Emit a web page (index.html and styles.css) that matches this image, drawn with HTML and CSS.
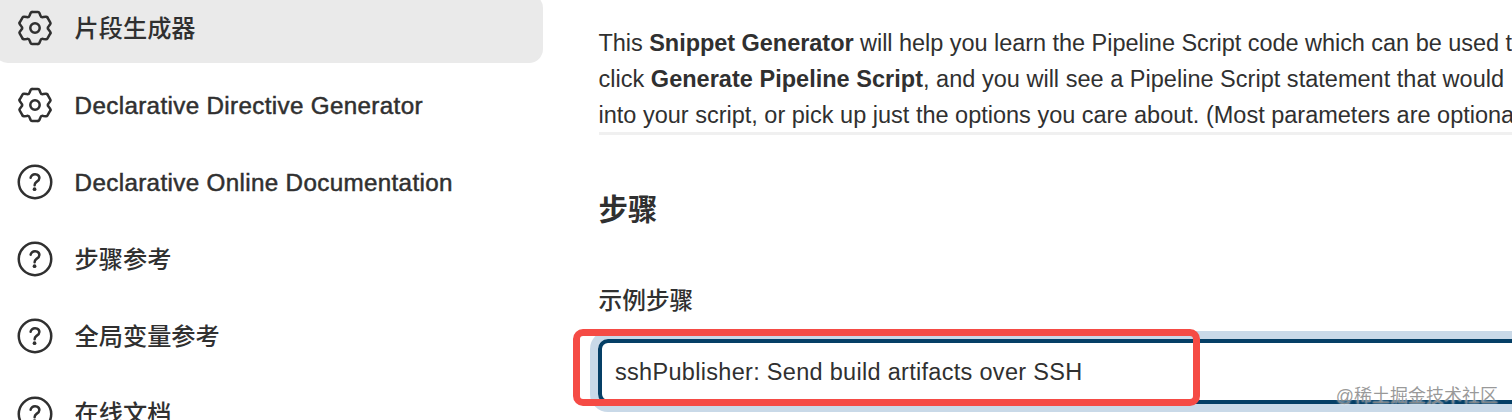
FILE: index.html
```
<!DOCTYPE html>
<html lang="zh-CN">
<head>
    <meta charset="UTF-8">
    <meta name="viewport" content="width=device-width, initial-scale=1.0">
    <title>片段生成器</title>
    <link rel="stylesheet" href="styles.css">
</head>
<body>
    <!-- shared icons -->
    <svg class="icon-defs" width="0" height="0">
        <defs>
            <path id="gear-tooth" d="M-3-16H3Q4-16 4.4-15L5.3-12.7Q6-10.4 8.35-10.94L10.8-11.3Q11.86-11.46 12.36-10.6"/>
        </defs>
        <symbol id="icon-gear" viewBox="-20 -20 40 40">
            <circle cx="0" cy="0" r="4.7"/>
            <use href="#gear-tooth"/>
            <use href="#gear-tooth" transform="rotate(60)"/>
            <use href="#gear-tooth" transform="rotate(120)"/>
            <use href="#gear-tooth" transform="rotate(180)"/>
            <use href="#gear-tooth" transform="rotate(240)"/>
            <use href="#gear-tooth" transform="rotate(300)"/>
        </symbol>
        <symbol id="icon-help" viewBox="0 0 512 512">
            <circle cx="256" cy="256" r="208"/>
            <path d="M200 202.29s.84-17.5 19.57-32.57C230.68 160.77 244 158.18 256 158c10.93-.14 20.69 1.67 26.53 4.45 10 4.76 29.47 16.38 29.47 41.09 0 26-17 37.81-36.37 50.8S251 281.43 251 296"/>
            <circle class="icon-dot" cx="250" cy="348" r="24"/>
        </symbol>
    </svg>

    <div class="page">
        <nav class="sidebar">
            <a class="task active" href="#">
                <svg class="icon gear"><use href="#icon-gear"/></svg>
                <span class="task-name">片段生成器</span>
            </a>
            <a class="task" href="#">
                <svg class="icon gear"><use href="#icon-gear"/></svg>
                <span class="task-latin">Declarative Directive Generator</span>
            </a>
            <a class="task" href="#">
                <svg class="icon"><use href="#icon-help"/></svg>
                <span class="task-latin">Declarative Online Documentation</span>
            </a>
            <a class="task" href="#">
                <svg class="icon"><use href="#icon-help"/></svg>
                <span class="task-name">步骤参考</span>
            </a>
            <a class="task" href="#">
                <svg class="icon"><use href="#icon-help"/></svg>
                <span class="task-name">全局变量参考</span>
            </a>
            <a class="task" href="#">
                <svg class="icon"><use href="#icon-help"/></svg>
                <span class="task-name">在线文档</span>
            </a>
        </nav>

        <main class="main-panel">
            <p class="intro">
                <span class="line-1">This <b>Snippet Generator</b> will help you learn the Pipeline Script code which can be used to</span><br>
                <span class="line-2">click <b>Generate Pipeline Script</b>, and you will see a Pipeline Script statement that would</span><br>
                <span class="line-3">into your script, or pick up just the options you care about. (Most parameters are optional</span>
            </p>
            <h2 class="section-title">步骤</h2>
            <div class="field-label">示例步骤</div>
            <div class="field">
                <div class="select">sshPublisher: Send build artifacts over SSH</div>
                <div class="marker"></div>
            </div>
        </main>
    </div>
    <div class="watermark">@稀土掘金技术社区</div>
</body>
</html>
```

FILE: styles.css
```
* {
    box-sizing: border-box;
}

body {
    margin: 0;
    height: 420px;
    overflow: hidden;
    background-color: #ffffff;
    color: #303030;
    font-family: "Liberation Sans", "Noto Sans CJK SC", sans-serif;
}

.icon-defs {
    position: absolute;
}

.page {
    display: flex;
    height: 420px;
    overflow: hidden;
}

/* Sidebar */
.sidebar {
    flex: none;
    display: flex;
    flex-direction: column;
    gap: 8px;
    width: 549px;
    margin: -6.5px 0 0 -6px;
}

.task {
    flex: none;
    display: flex;
    align-items: center;
    gap: 20px;
    height: 69.1px;
    padding-left: 20.6px;
    border-radius: 14px;
    color: #303030;
    font-size: 24.2px;
    font-weight: 500;
    text-decoration: none;
    white-space: nowrap;
}

.task.active {
    background-color: #eaeaea;
}

.task-name {
    padding-bottom: 4px;
}

.task-latin {
    padding-top: 2px;
    letter-spacing: 0.35px;
    -webkit-text-stroke: 0.5px #303030;
}

.icon {
    flex: none;
    width: 40px;
    height: 40px;
    fill: none;
    stroke: #303030;
    stroke-width: 32px;
    stroke-linecap: round;
    stroke-linejoin: round;
}

.icon.gear {
    stroke-width: 2.5px;
}

.icon-dot {
    fill: #303030;
    stroke: none;
}

/* Main panel */
.main-panel {
    flex: 1;
    min-width: 0;
    padding: 25px 0 0 55.5px;
    white-space: nowrap;
}

.intro {
    margin: 0;
    height: 110px;
    border-bottom: 3px solid #f0f0f0;
    font-size: 23.5px;
    line-height: 36px;
}

.line-1 {
    letter-spacing: -0.04px;
}

.line-2 {
    letter-spacing: 0.02px;
}

.section-title {
    margin: 54px 0 0;
    font-size: 29.5px;
    font-weight: 700;
    line-height: 42px;
}

.field-label {
    margin-top: 52px;
    font-size: 23.7px;
    font-weight: 500;
    line-height: 36px;
}

.field {
    position: relative;
    margin: 19.5px 0 0 -0.5px;
}

.select {
    width: 1000px;
    height: 65.5px;
    padding-left: 13px;
    border: 4px solid #053f66;
    border-radius: 10px;
    box-shadow: 0 0 0 8px #c9d9e8;
    font-size: 23.5px;
    letter-spacing: 0.3px;
    line-height: 59px;
}

/* Red frame drawn over the field */
.marker {
    position: absolute;
    top: -9.5px;
    left: -25.5px;
    width: 627px;
    height: 77px;
    border: 7px solid #f54b45;
    border-radius: 10px;
}

.watermark {
    position: absolute;
    right: 14px;
    bottom: 11px;
    color: rgba(120, 120, 120, 0.75);
    font-size: 18px;
    line-height: 26px;
    text-shadow: 0 0 2px #ffffff;
}
```
